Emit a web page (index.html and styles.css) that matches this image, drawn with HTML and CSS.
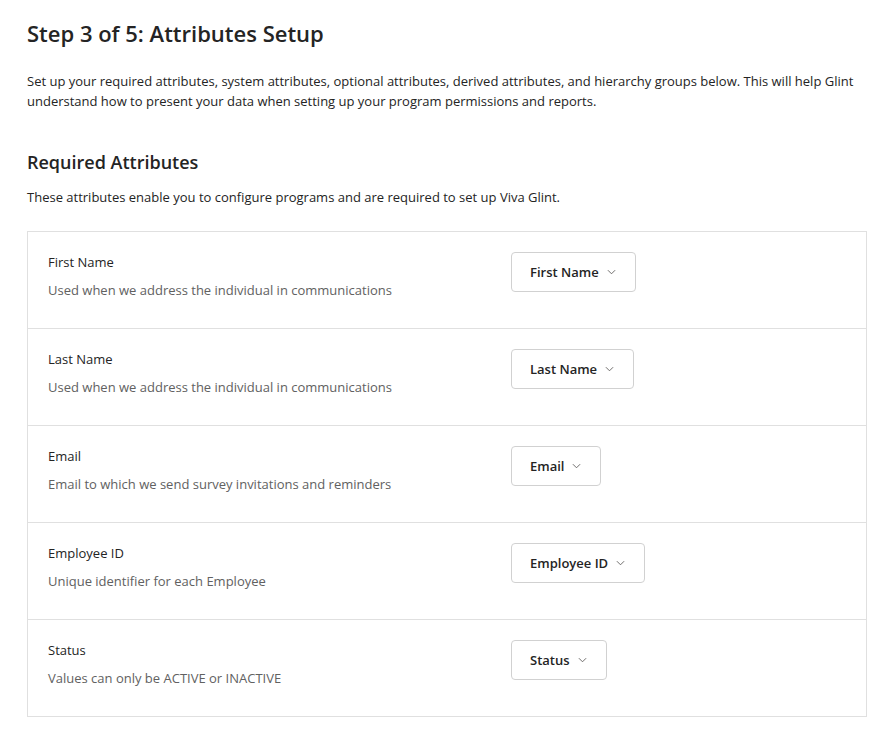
FILE: index.html
```html
<!DOCTYPE html>
<html lang="en">
<head>
<meta charset="utf-8">
<title>Attributes Setup</title>
<link rel="stylesheet" href="styles.css">
</head>
<body>
<main class="page">
  <h1 class="title">Step 3 of 5: Attributes Setup</h1>
  <p class="intro">Set up your required attributes, system attributes, optional attributes, derived attributes, and hierarchy groups below. This will help Glint understand how to present your data when setting up your program permissions and reports.</p>
  <h2 class="section-title">Required Attributes</h2>
  <p class="section-desc">These attributes enable you to configure programs and are required to set up Viva Glint.</p>
  <div class="card">
    <div class="row">
      <div class="info"><div class="label">First Name</div><div class="desc">Used when we address the individual in communications</div></div>
      <div class="control"><button class="dropdown">First Name <svg class="chev" viewBox="0 0 10 6" width="10" height="6"><path d="M1 1l4 4 4-4" fill="none" stroke="#605e5c" stroke-width="1"/></svg></button></div>
    </div>
    <div class="row">
      <div class="info"><div class="label">Last Name</div><div class="desc">Used when we address the individual in communications</div></div>
      <div class="control"><button class="dropdown">Last Name <svg class="chev" viewBox="0 0 10 6" width="10" height="6"><path d="M1 1l4 4 4-4" fill="none" stroke="#605e5c" stroke-width="1"/></svg></button></div>
    </div>
    <div class="row">
      <div class="info"><div class="label">Email</div><div class="desc">Email to which we send survey invitations and reminders</div></div>
      <div class="control"><button class="dropdown">Email <svg class="chev" viewBox="0 0 10 6" width="10" height="6"><path d="M1 1l4 4 4-4" fill="none" stroke="#605e5c" stroke-width="1"/></svg></button></div>
    </div>
    <div class="row">
      <div class="info"><div class="label">Employee ID</div><div class="desc">Unique identifier for each Employee</div></div>
      <div class="control"><button class="dropdown">Employee ID <svg class="chev" viewBox="0 0 10 6" width="10" height="6"><path d="M1 1l4 4 4-4" fill="none" stroke="#605e5c" stroke-width="1"/></svg></button></div>
    </div>
    <div class="row">
      <div class="info"><div class="label">Status</div><div class="desc">Values can only be ACTIVE or INACTIVE</div></div>
      <div class="control"><button class="dropdown">Status <svg class="chev" viewBox="0 0 10 6" width="10" height="6"><path d="M1 1l4 4 4-4" fill="none" stroke="#605e5c" stroke-width="1"/></svg></button></div>
    </div>
  </div>
</main>
</body>
</html>
```
FILE: styles.css
```css
html, body {
  margin: 0;
  padding: 0;
  background: #ffffff;
}
body {
  font-family: "Open Sans", "Noto Sans", sans-serif;
  color: #242424;
}
.page {
  padding: 18px 28px 22px 27px;
}
.title {
  margin: 0;
  font-size: 22px;
  line-height: 30px;
  font-weight: 600;
  color: #242424;
}
.intro {
  margin: 23px 0 0;
  font-size: 13px;
  line-height: 20px;
  color: #242424;
}
.section-title {
  margin: 39px 0 0;
  font-size: 18px;
  line-height: 24px;
  font-weight: 600;
}
.section-desc {
  margin: 13px 0 0;
  font-size: 13px;
  line-height: 20px;
}
.card {
  margin-top: 24px;
  border: 1px solid #e0e0e0;
}
.row {
  display: grid;
  grid-template-columns: 463px 1fr;
  padding: 20px 20px 0;
  height: 76px;
  align-items: start;
  border-top: 1px solid #e0e0e0;
}
.row:first-child {
  border-top: none;
}
.info {
  padding-top: 1px;
}
.label {
  font-size: 13px;
  line-height: 18px;
  color: #242424;
}
.desc {
  margin-top: 10px;
  font-size: 13px;
  line-height: 18px;
  color: #616161;
}
.dropdown {
  display: inline-flex;
  align-items: center;
  gap: 8px;
  height: 40px;
  padding: 0 19px 0 18px;
  background: #fff;
  border: 1px solid #d1d1d1;
  border-radius: 4px;
  font-family: inherit;
  font-size: 13px;
  font-weight: 600;
  color: #242424;
}
.chev {
  width: 9px;
  height: 6px;
}
```
